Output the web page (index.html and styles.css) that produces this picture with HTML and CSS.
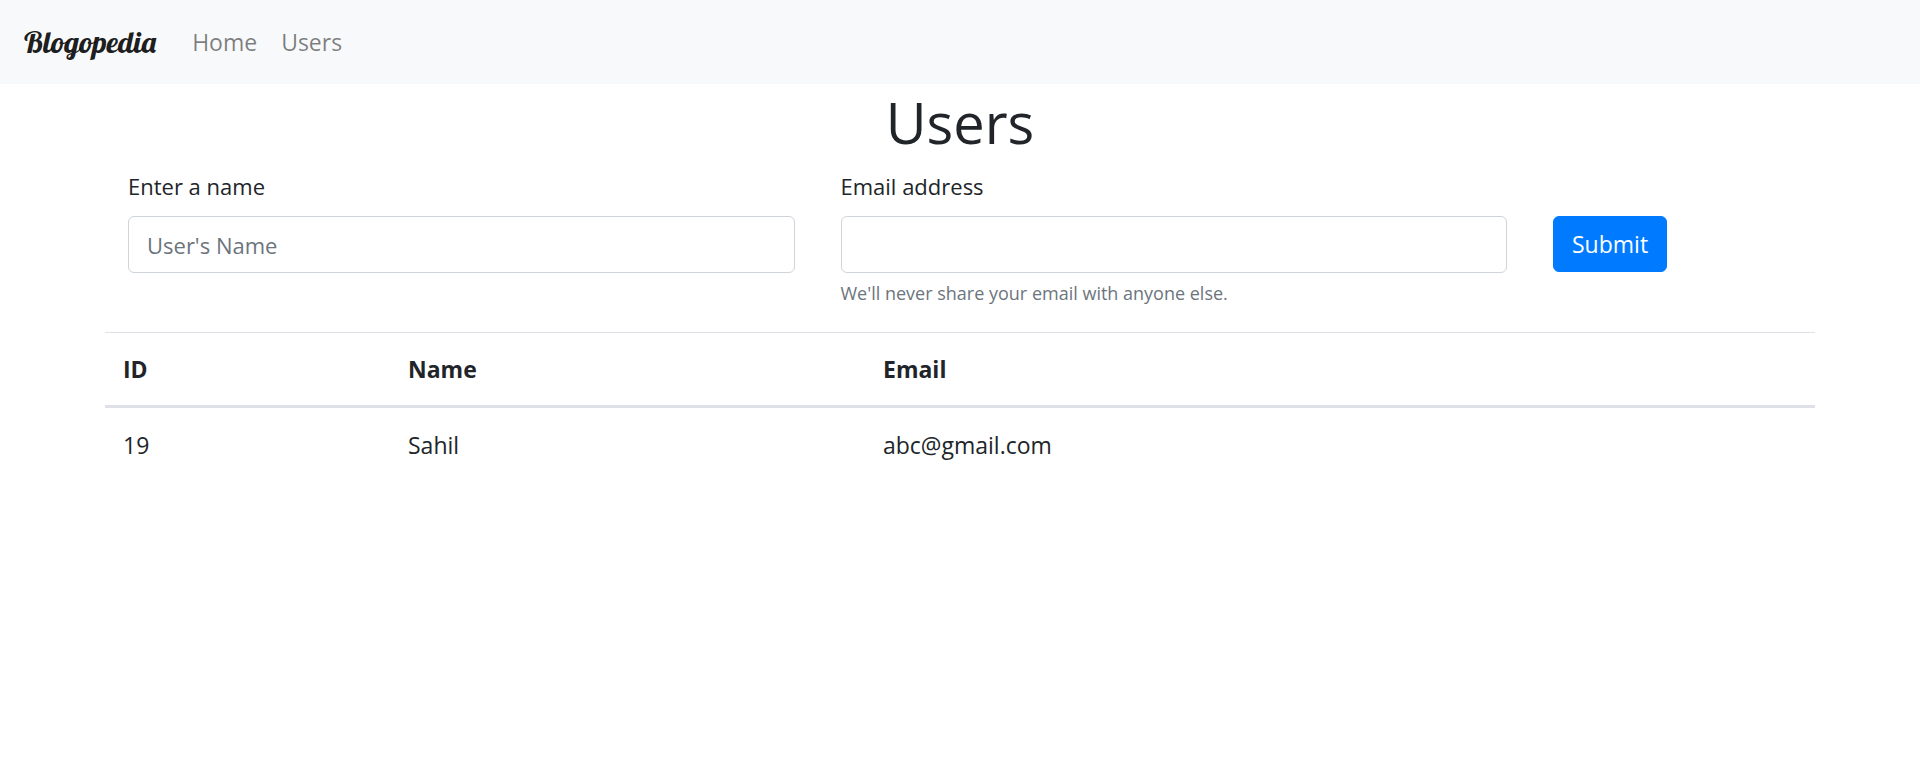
FILE: index.html
```html
<!DOCTYPE html>
<html lang="en">
<head>
  <meta charset="utf-8">
  <meta name="viewport" content="width=device-width, initial-scale=1">
  <title>Blogopedia - Users</title>
  <link rel="stylesheet" href="styles.css">
</head>
<body>
  <nav class="navbar">
    <a class="navbar-brand" href="#">Blogopedia</a>
    <div class="navbar-nav">
      <a class="nav-link" href="#">Home</a>
      <a class="nav-link" href="#">Users</a>
    </div>
  </nav>
  <main class="container">
    <h1 class="title">Users</h1>
    <form class="user-form">
      <div class="field">
        <label class="label" for="name">Enter a name</label>
        <input class="input" id="name" type="text" placeholder="User's Name">
      </div>
      <div class="field">
        <label class="label" for="email">Email address</label>
        <input class="input" id="email" type="email" aria-describedby="email-help">
        <small class="help" id="email-help">We'll never share your email with anyone else.</small>
      </div>
      <div class="field action">
        <button class="button" type="submit">Submit</button>
      </div>
    </form>
    <table class="table">
      <thead>
        <tr><th class="col-id" scope="col">ID</th><th class="col-name" scope="col">Name</th><th scope="col">Email</th></tr>
      </thead>
      <tbody>
        <tr><td>19</td><td>Sahil</td><td>abc@gmail.com</td></tr>
      </tbody>
    </table>
  </main>
</body>
</html>
```

FILE: styles.css
```css
*,
*::before,
*::after {
  box-sizing: border-box;
}

body {
  margin: 0;
  background: #fff;
  color: #212529;
  font-family: "Segoe UI", "Open Sans", "Noto Sans", sans-serif;
  font-size: 23px;
  line-height: 36px;
}

.navbar {
  display: flex;
  align-items: center;
  gap: 24px;
  padding: 12px 24px;
  background: #f8f9fa;
}

.navbar-brand {
  color: rgba(0, 0, 0, 0.9);
  font-family: Lobster, "Liberation Serif", serif;
  font-size: 30px;
  font-weight: 400;
  text-decoration: none;
}

.navbar-nav {
  display: flex;
}

.nav-link {
  padding: 12px;
  color: rgba(0, 0, 0, 0.5);
  text-decoration: none;
}

.container {
  max-width: 1710px;
  margin: 0 auto;
}

.title {
  margin: 0 0 8px;
  font-size: 56px;
  font-weight: 400;
  line-height: 76px;
  text-align: center;
}

.user-form {
  display: grid;
  grid-template-columns: 5fr 5fr 2fr;
  margin-bottom: 24px;
  font-size: 22px;
}

.field {
  min-width: 0;
  padding: 0 23px;
}

.label {
  display: block;
  margin-bottom: 12px;
}

.input {
  display: block;
  width: 100%;
  height: 57px;
  padding: 9px 18px;
  border: 1px solid #ced4da;
  border-radius: 6px;
  background: #fff;
  color: #495057;
  font: inherit;
}

.input::placeholder {
  color: #6c757d;
  opacity: 1;
}

.help {
  display: block;
  margin-top: 6px;
  color: #6c757d;
  font-size: 18px;
  line-height: 29px;
}

.action {
  padding-top: 48px;
}

.button {
  height: 56px;
  padding: 9px 18px;
  border: 1px solid #007bff;
  border-radius: 6px;
  background: #007bff;
  color: #fff;
  font: inherit;
  font-size: 23px;
}

.table {
  width: 100%;
  table-layout: fixed;
  border-collapse: separate;
  border-spacing: 0;
}

.table th,
.table td {
  padding: 18px;
  border-top: 1px solid #dee2e6;
  text-align: left;
}

.table th {
  border-bottom: 3px solid #dee2e6;
}

.table tbody tr:first-child td {
  border-top-color: transparent;
}

.col-id {
  width: 16.6667%;
}

.col-name {
  width: 27.7778%;
}
```
